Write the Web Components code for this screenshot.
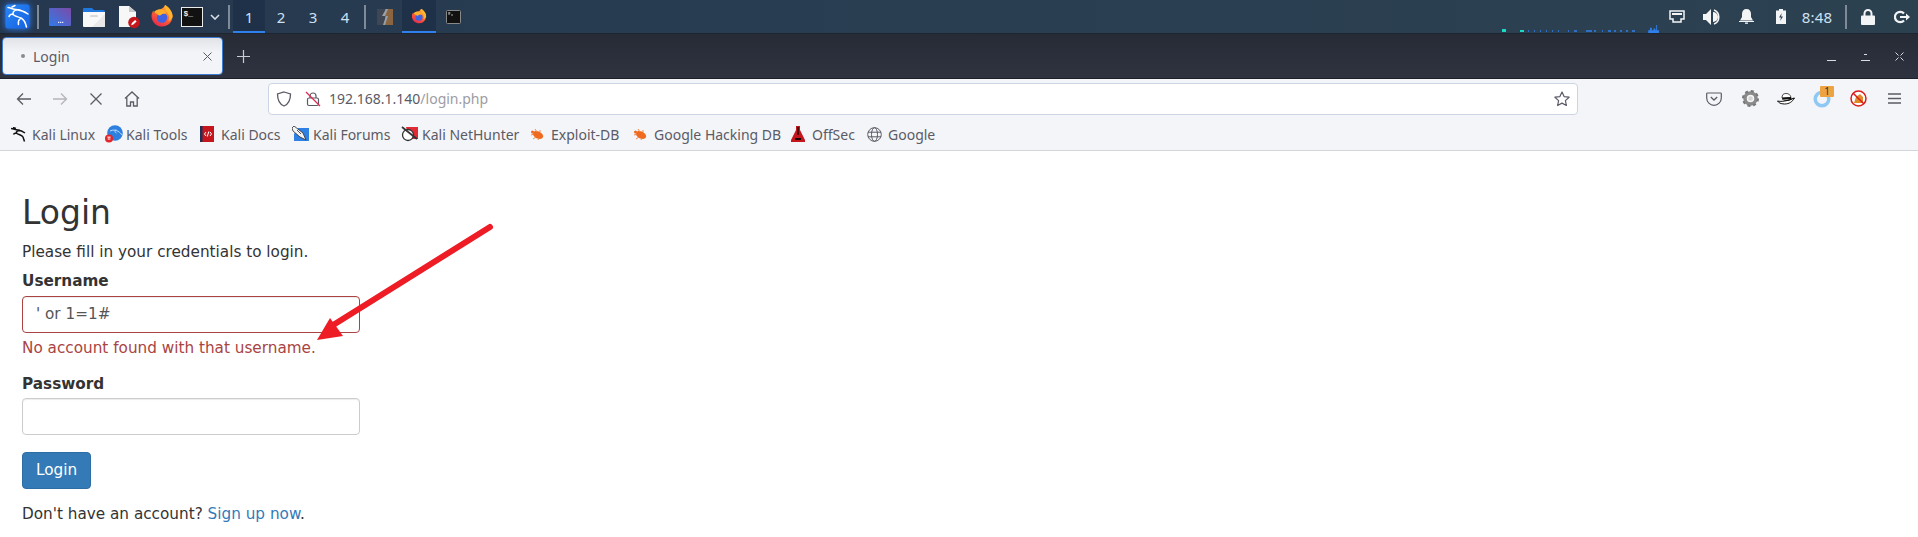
<!DOCTYPE html>
<html>
<head>
<meta charset="utf-8">
<title>Login</title>
<style>
  html, body { margin: 0; height: 537px; overflow: hidden; background: #fff; }
</style>
</head>
<body>
<kali-panel></kali-panel>
<browser-tabs></browser-tabs>
<nav-toolbar></nav-toolbar>
<bookmark-bar></bookmark-bar>
<login-form></login-form>

<script>
const ICONS = {
  kali: `<svg width="25" height="25" viewBox="0 0 25 25"><defs><linearGradient id="k" x1="0" y1="0" x2="1" y2="1"><stop offset="0" stop-color="#2a88f6"/><stop offset="1" stop-color="#1560e0"/></linearGradient></defs><rect x=".5" y=".5" width="24" height="24" rx="2.500" fill="url(#k)"/><path d="M3 3.500c3 .5 5 2 8 2 3 .3 7 1 12 4.500M15 6c-4-.5-7 .5-7 3.500 0 3 5 3 8 4.500 3 1.500 4.500 4.500 5.500 9M8 10.500C6 10 4.500 10.500 4 12.500M7 3l3-1.500M15 15c-1.500 1-2 3-1.500 5.500" fill="none" stroke="#fff" stroke-width="1.500" stroke-linecap="round"/></svg>`,
  desktop: `<svg width="24" height="18" viewBox="0 0 24 18"><defs><linearGradient id="d" x1="0" y1="1" x2="1" y2="0"><stop offset="0" stop-color="#2f7be8"/><stop offset="1" stop-color="#7c4aa8"/></linearGradient></defs><rect width="22" height="18" x="1" rx="1" fill="url(#d)"/><path d="M10 15h1.300v-1.300H10zM12 15h1.300v-1.300H12zM14 15h1.300v-1.300H14z" fill="#e6ecf8"/></svg>`,
  folder: `<svg width="24" height="20" viewBox="0 0 24 20"><path d="M1 2a1 1 0 0 1 1-1h8l2 2h9a2 2 0 0 1 2 2v2H1z" fill="#1f78e0"/><path d="M1 5h22v14a1 1 0 0 1-1 1H2a1 1 0 0 1-1-1z" fill="#f8f8f8"/><path d="M23 7v12a1 1 0 0 1-1 1H10z" fill="#e9e9e9"/><path d="M8 9.500a1 1 0 0 1 1-1h6a1 1 0 0 1 1 1z" fill="#b4b8bd"/></svg>`,
  doc: `<svg width="22" height="24" viewBox="0 0 22 24"><path d="M1 1h10l7 6v15H1z" fill="#f7f7f7"/><path d="M11 1l7 6h-7z" fill="#c9c9c9"/><circle cx="16" cy="17.500" r="5.800" fill="#c4161c"/><path d="M13.200 20.300l.7-2.200 3.200-3 1.500 1.500-3.200 3z" fill="#fff"/></svg>`,
  firefox: `<svg width="22" height="23" viewBox="0 0 22 23"><defs><linearGradient id="f" x1="0.800" y1="0" x2="0.200" y2="1"><stop offset="0" stop-color="#ffbf30"/><stop offset="0.450" stop-color="#ff6a30"/><stop offset="1" stop-color="#e5234f"/></linearGradient></defs><path d="M14 0c5 3 8 8 7.500 12A10.500 10.500 0 1 1 1 8c.5-1 1-2 1.500-2.500L3 8c1-1.500 3-3.500 6-3.500 2-.8 4-2 5-4.500z" fill="url(#f)"/><path d="M14 0c5 3 8 8 7.500 12-1 2-3 4-4 4 1.500-4 0-8-3-10z" fill="#ffb52e"/><circle cx="11" cy="12.500" r="5.200" fill="#3f62e4"/><path d="M3 7c3-3 7-3.500 10-1.500 2 1 2.500 3 2.500 3L11 9c-.5 1-2 1.500-3 1.500C7 9.500 5 8.500 3 7z" fill="#ffae2c"/></svg>`,
  term: `<svg width="22" height="20" viewBox="0 0 22 20"><rect x="0.500" y="0.500" width="21" height="19" fill="#111" stroke="#ececec"/><text x="2.500" y="9" font-family="Liberation Mono, monospace" font-weight="700" font-size="8" fill="#ececec">$_</text></svg>`,
  chev: `<svg width="10" height="6" viewBox="0 0 10 6"><path d="M1 1l4 4 4-4" stroke="#d8dee6" stroke-width="1.600" fill="none"/></svg>`,
  task1: `<svg width="16" height="16" viewBox="0 0 16 16"><rect width="8" height="16" fill="#3f4754"/><rect x="8" width="8" height="16" fill="#8a6540"/><path d="M9 0L5 7h4l-3 9 2 0 3-9H8l3-7z" fill="#9aa0a8"/></svg>`,
  termsm: `<svg width="15" height="14" viewBox="0 0 15 14"><rect x="0.500" y="0.500" width="14" height="13" rx="1" fill="#111" stroke="#888"/><path d="M2.500 3h2M3 2v3M5 5h2" stroke="#ccc" stroke-width=".8"/></svg>`,
  net: `<svg width="16" height="14" viewBox="0 0 16 14"><path d="M1 1h14v8h-3v3H4V9H1z" fill="none" stroke="#f2f4f6" stroke-width="1.500"/><path d="M3 3h10v2H3z" fill="#f2f4f6"/></svg>`,
  vol: `<svg width="18" height="16" viewBox="0 0 18 16"><path d="M0 5h3l5-5v16l-5-5H0z" fill="#f2f4f6"/><path d="M10 3a5 5 0 0 1 0 10" fill="#f2f4f6"/><path d="M11 1a7.500 7.500 0 0 1 0 14" fill="none" stroke="#f2f4f6" stroke-width="1.500"/></svg>`,
  bell: `<svg width="15" height="15" viewBox="0 0 15 15"><path d="M7.500 0c-3 0-4.500 2-4.500 5v3L1 11.500h13L12 8V5c0-3-1.500-5-4.500-5z" fill="#f2f4f6"/><rect x="0" y="12" width="15" height="1" fill="#f2f4f6"/><rect x="6" y="13.500" width="3" height="1.300" fill="#f2f4f6"/></svg>`,
  batt: `<svg width="10" height="15" viewBox="0 0 10 15"><path d="M3 0h4v1.500h3V15H0V1.500h3z" fill="#f2f4f6"/><path d="M5.800 4L3 8.500h2L4.200 12 7 7.500H5z" fill="#2c4050"/></svg>`,
  lock: `<svg width="14" height="16" viewBox="0 0 14 16"><path d="M3.500 7V4.500a3.500 3.500 0 0 1 7 0V7" fill="none" stroke="#f2f4f6" stroke-width="2"/><rect y="6.500" width="14" height="9.500" rx="1" fill="#f2f4f6"/></svg>`,
  logout: `<svg width="16" height="14" viewBox="0 0 16 14"><path d="M10 3.500A5.200 5.200 0 1 0 10 10.500" fill="none" stroke="#f2f4f6" stroke-width="2.200"/><path d="M6 6h6V3.500L16 7l-4 3.500V8H6z" fill="#f2f4f6"/></svg>`,
  back: `<svg width="16" height="14" viewBox="0 0 16 14"><path d="M15 7H2M7 1.500L1.500 7 7 12.500" fill="none" stroke="#5b5b66" stroke-width="1.300"/></svg>`,
  fwd: `<svg width="16" height="14" viewBox="0 0 16 14"><path d="M1 7h13M9 1.500L14.500 7 9 12.500" fill="none" stroke="#b4b4ba" stroke-width="1.300"/></svg>`,
  stop: `<svg width="14" height="14" viewBox="0 0 14 14"><path d="M1.500 1.500l11 11M12.500 1.500l-11 11" stroke="#5b5b66" stroke-width="1.300"/></svg>`,
  home: `<svg width="16" height="16" viewBox="0 0 16 16"><path d="M1 7.500L8 1l7 6.500M2.800 6.500V15h3.700v-4h3v4h3.700V6.500" fill="none" stroke="#5b5b66" stroke-width="1.300"/></svg>`,
  shield: `<svg width="16" height="16" viewBox="0 0 16 16"><path d="M8 1l6.500 2c0 6-1.500 10-6.500 12C3 13 1.500 9 1.500 3z" fill="none" stroke="#5b5b66" stroke-width="1.300"/></svg>`,
  lockoff: `<svg width="16" height="16" viewBox="0 0 16 16"><path d="M5 7V5a3 3 0 0 1 6 0v2" fill="none" stroke="#5b5b66" stroke-width="1.200"/><rect x="2.500" y="7" width="11" height="7.500" rx="1.500" fill="none" stroke="#5b5b66" stroke-width="1.200"/><path d="M1 1l14 14" stroke="#e22850" stroke-width="1.300"/></svg>`,
  star: `<svg width="16" height="16" viewBox="0 0 16 16"><path d="M8 1l2.100 4.600 5 .6-3.700 3.400 1 4.900L8 12.100l-4.400 2.400 1-4.900L.9 6.200l5-.6z" fill="none" stroke="#5b5b66" stroke-width="1.200" stroke-linejoin="round"/></svg>`,
  pocket: `<svg width="16" height="14" viewBox="0 0 16 14"><path d="M1.500 1h13a.8.8 0 0 1 .8.800V6a7.300 7.300 0 0 1-14.600 0V1.800A.8.8 0 0 1 1.500 1z" fill="none" stroke="#5b5b66" stroke-width="1.200"/><path d="M4.800 5L8 8l3.200-3" fill="none" stroke="#5b5b66" stroke-width="1.300"/></svg>`,
  gear: `<svg width="17" height="17" viewBox="0 0 17 17"><circle cx="8.500" cy="8.500" r="5.500" fill="none" stroke="#8a8a8a" stroke-width="3.500"/><circle cx="8.500" cy="8.500" r="7.500" fill="none" stroke="#777" stroke-width="2" stroke-dasharray="3 2.900"/><circle cx="8.500" cy="8.500" r="2.300" fill="#d4d4d4"/></svg>`,
  hat: `<svg width="18" height="12" viewBox="0 0 18 12"><path d="M5 5c0-3 1-4.500 4-4.500s4.500 1.500 5 4z" fill="#fff" stroke="#222" stroke-width=".8"/><path d="M5 4.800l9-.8.3 2-9 .8z" fill="#111"/><path d="M.5 8c4 1 10 0 17-3-2 3.500-5 6-10 6-4 0-6-1.500-7-3z" fill="#fff" stroke="#111" stroke-width="1"/><path d="M6 7.500c4 0 8-1.500 11-3-2 2.500-6 4.500-11 3z" fill="#111"/></svg>`,
  noscript: `<svg width="17" height="17" viewBox="0 0 17 17"><circle cx="8.500" cy="8.500" r="7.500" fill="#fff" stroke="#d91c1c" stroke-width="1.500"/><path d="M4 13l2-6 4-3 3 3v6z" fill="#e08a2a"/><path d="M3.200 3.200l10.600 10.600" stroke="#d91c1c" stroke-width="1.500"/></svg>`,
  menu: `<svg width="13" height="11" viewBox="0 0 13 11"><path d="M0 1h13M0 5.500h13M0 10h13" stroke="#5b5b66" stroke-width="1.300"/></svg>`,
  bmkali: `<svg width="17" height="15" viewBox="0 0 17 15"><path d="M0 1.500c3 .5 5 1.500 7 1.500 3 .3 5 1.500 7 3M9 3.500C6 3.500 4.500 5 6 6.500c2 1.500 5 1.500 6 3.500l1.500 4.500M6 6c-1.500 0-3 0-3.500 1.500M2 .5l3 1" fill="none" stroke="#111" stroke-width="1.500"/></svg>`,
  bmtools: `<svg width="18" height="18" viewBox="0 0 18 18"><circle cx="10" cy="8" r="7.800" fill="#2d7fe0"/><path d="M5 6c3-1.500 6-1 8 .3s3 2 4 3.700M11 4.500c-1.500 1-1.500 3 .5 3.500" fill="none" stroke="#cfe3fa" stroke-width=".9"/><circle cx="4" cy="13.500" r="4" fill="#e0252b"/><path d="M2.300 12h3.400M3.300 12v3M4.800 12v3" stroke="#fff" stroke-width=".7"/></svg>`,
  bmdocs: `<svg width="14" height="16" viewBox="0 0 14 16"><rect width="14" height="16" fill="#c4161c"/><rect width="2.500" height="16" fill="#1d2f55"/><path d="M6 6L4.500 8 6 10M10 6l1.500 2L10 10M8.800 5.500l-1.500 5" fill="none" stroke="#fff" stroke-width="1"/></svg>`,
  bmforum: `<svg width="17" height="16" viewBox="0 0 17 16"><path d="M6 2h11v13H2V8z" fill="#2f80e4"/><path d="M0 2l2-2 9 7 3 7-6-3-7-6z" fill="#f4f4f4" stroke="#2a2a2a" stroke-width=".8"/><path d="M5 4l4 4" stroke="#2a2a2a" stroke-width=".8"/></svg>`,
  bmnh: `<svg width="17" height="16" viewBox="0 0 17 16"><path d="M5 1h12v12H8z" fill="#e02b35"/><circle cx="7" cy="9" r="5.500" fill="#fff" stroke="#333" stroke-width="1.300"/><path d="M1 1l15 12" stroke="#333" stroke-width="1.700"/></svg>`,
  bug: `<svg width="15" height="13" viewBox="0 0 15 13"><ellipse cx="8" cy="7" rx="5.500" ry="3.500" fill="#ef6a1f" transform="rotate(25 8 7)"/><circle cx="2.500" cy="4" r="1.500" fill="#ef6a1f"/><path d="M1 7l3-1M3 11l3-2M8 12l1-2M5 1l2 3M10 2l0 2" stroke="#f08a4a" stroke-width="1"/></svg>`,
  bmoff: `<svg width="14" height="16" viewBox="0 0 14 16"><path d="M5 0h4v4l5 10v2H0v-2l5-10z" fill="#c4161c"/><path d="M6.300 1h1.400v8h-1.400zM4 12h6v2H4z" fill="#200"/></svg>`,
  globe: `<svg width="15" height="15" viewBox="0 0 15 15"><g fill="none" stroke="#5b5b66" stroke-width="1"><circle cx="7.500" cy="7.500" r="6.800"/><ellipse cx="7.500" cy="7.500" rx="3" ry="6.800"/><path d="M1 5.200h13M1 9.800h13"/></g></svg>`
}

class UiIcon extends HTMLElement {
  constructor() {
    super()
    const shadow = this.attachShadow({ mode: 'open' })
    const name = this.getAttribute('name')
    shadow.innerHTML = `<style>:host{display:inline-flex;align-items:center;justify-content:center;flex:none}svg{display:block}</style>${ICONS[name] || ''}`
  }
}
customElements.define('ui-icon', UiIcon)

class KaliPanel extends HTMLElement {
  constructor() {
    super()
    const shadow = this.attachShadow({ mode: 'open' })
    shadow.innerHTML = `
    <style>
      :host { display: flex; height: 34px; align-items: stretch; box-sizing: border-box;
        background: linear-gradient(90deg, #25384f, #2a3e52 50%, #2c4150);
        border-bottom: 1px solid #1c2530;
        font-family: "Noto Sans", sans-serif; color: #cfe0f2; }
      .s { display: flex; align-items: center; justify-content: center; flex: none; }
      .sep { width: 2px; height: 24px; background: #7f8b98; align-self: center; flex: none; }
      .ws { font-size: 15px; width: 32px; height: 33px; box-sizing: border-box; }
      .on { background: #1f3148; box-shadow: inset 0 -2px 0 #2f80ed; }
      .kali { filter: drop-shadow(0 0 3px #2b7fff); }
      .graph { margin-left: auto; margin-right: 10px; align-self: flex-end; display: block; }
      .time { font-size: 15px; letter-spacing: .2px; color: #cfe0f2; }
    </style>
    <div class="s" style="width:34px"><ui-icon class="kali" name="kali"></ui-icon></div>
    <div class="sep" style="margin:0 3px"></div>
    <div class="s" style="width:34px;margin-left:1px"><ui-icon name="desktop"></ui-icon></div>
    <div class="s" style="width:34px"><ui-icon name="folder"></ui-icon></div>
    <div class="s" style="width:36px"><ui-icon name="doc"></ui-icon></div>
    <div class="s" style="width:30px"><ui-icon name="firefox"></ui-icon></div>
    <div class="s" style="width:30px"><ui-icon name="term"></ui-icon></div>
    <div class="s" style="width:16px"><ui-icon name="chev"></ui-icon></div>
    <div class="sep" style="margin:0 3px 0 5px"></div>
    <div class="s ws on">1</div><div class="s ws">2</div><div class="s ws">3</div><div class="s ws">4</div>
    <div class="sep" style="margin:0 2px 0 3px"></div>
    <div class="s" style="width:34px"><ui-icon name="task1"></ui-icon></div>
    <div class="s on" style="width:34px;height:33px"><ui-icon name="firefox" style="transform:scale(.68)"></ui-icon></div>
    <div class="s" style="width:34px"><ui-icon name="termsm"></ui-icon></div>
    <svg class="graph" width="136" height="4" viewBox="0 0 136 4">
      <rect x="0" y="0" width="4" height="3" fill="#1fd8c4"/><rect x="18" y="1" width="4" height="2" fill="#1fd8c4"/>
      <path d="M26 2h1M32 2h1M38 2h1M44 2h1M50 2h1M56 2h1M66 2h1M72 2h3M84 2h6M92 2h2M100 2h1M106 2h3M112 2h2M118 2h2M124 2h2M130 2h3" stroke="#2f80ed" stroke-width="1.500"/>
    </svg>
    <svg style="align-self:flex-end;display:block" width="12" height="8" viewBox="0 0 13 9"><path d="M0 9V6h2V3h2v3h2V4h2v2h1V0h1v6h2v3z" fill="#2f80ed"/></svg>
    <div class="s" style="width:34px"><ui-icon name="net"></ui-icon></div>
    <div class="s" style="width:35px"><ui-icon name="vol"></ui-icon></div>
    <div class="s" style="width:35px"><ui-icon name="bell"></ui-icon></div>
    <div class="s" style="width:34px"><ui-icon name="batt"></ui-icon></div>
    <div class="s time" style="width:38px">8:48</div>
    <div class="sep" style="margin:0 4px 0 9px"></div>
    <div class="s" style="width:33px"><ui-icon name="lock"></ui-icon></div>
    <div class="s" style="width:32px;margin-left:2px"><ui-icon name="logout"></ui-icon></div>
    `
  }
}
customElements.define('kali-panel', KaliPanel)

class BrowserTabs extends HTMLElement {
  constructor() {
    super()
    const shadow = this.attachShadow({ mode: 'open' })
    shadow.innerHTML = `
    <style>
      :host { display: flex; height: 45px; align-items: center; box-sizing: border-box;
        background: linear-gradient(#272b36, #2f3340); border-bottom: 1px solid #1d2028;
        font-family: "Noto Sans", sans-serif; }
      .tab { width: 221px; height: 38px; margin-left: 2px; box-sizing: border-box; display: flex; align-items: center;
        background: linear-gradient(#e2e3e6, #f3f4f8 40%); border: 1px solid #3d7bd0; border-radius: 4px;
        color: #5b5b66; font-size: 14px; padding: 0 10px 0 18px; }
      .dot { width: 4px; height: 4px; border-radius: 50%; background: #8a8a92; margin-right: 8px; }
      .title { flex: 1; }
      .new { margin-left: 14px; display: block; }
      .win { margin-left: auto; display: flex; margin-right: 14px; gap: 25px; }
      svg { display: block; }
    </style>
    <div class="tab"><span class="dot"></span><span class="title">Login</span>
      <svg width="9" height="9" viewBox="0 0 9 9"><path d="M.5.5l8 8M8.500.5l-8 8" stroke="#5b5b66" stroke-width="1"/></svg></div>
    <svg class="new" width="13" height="13" viewBox="0 0 13 13"><path d="M6.500 0v13M0 6.500h13" stroke="#c8ccd4" stroke-width="1.200"/></svg>
    <div class="win">
      <svg width="9" height="9" viewBox="0 0 9 9"><path d="M0 8.500h9" stroke="#d8dce2"/></svg>
      <svg width="9" height="9" viewBox="0 0 9 9"><path d="M0 8.500h9M3 2.500h3" stroke="#d8dce2"/></svg>
      <svg width="9" height="9" viewBox="0 0 9 9"><path d="M.5.500l3 3M8.500.5l-3 3M.5 8.500l3-3M8.500 8.500l-3-3" stroke="#d8dce2"/></svg>
    </div>
    `
  }
}
customElements.define('browser-tabs', BrowserTabs)

class NavToolbar extends HTMLElement {
  constructor() {
    super()
    const shadow = this.attachShadow({ mode: 'open' })
    shadow.innerHTML = `
    <style>
      :host { display: flex; height: 39px; align-items: center; box-sizing: border-box; background: #f4f5f8;
        font-family: "Noto Sans", sans-serif; }
      .b { width: 36px; display: flex; justify-content: center; flex: none; }
      .url { width: 1310px; height: 32px; margin-left: 118px; box-sizing: border-box; flex: none;
        background: #fff; border: 1px solid #ccd5e4; border-radius: 4px; display: flex; align-items: center;
        padding: 0 7px; font-size: 14px; color: #5b5b66; }
      .url .addr { margin-left: 8px; }
      .dim { color: #9c9ca4; }
      .lk { margin-left: 13px; }
      .star { margin-left: auto; }
      .ring { position: relative; }
      .badge { position: absolute; left: 16px; top: -4px; width: 14px; height: 11px; line-height: 11px; border-radius: 1px;
        background: #eda340; color: #333; font-size: 10px; text-align: center; }
      .ext { display: flex; margin-left: 118px; }
    </style>
    <div class="b" style="margin-left:6px"><ui-icon name="back"></ui-icon></div>
    <div class="b"><ui-icon name="fwd"></ui-icon></div>
    <div class="b"><ui-icon name="stop"></ui-icon></div>
    <div class="b"><ui-icon name="home"></ui-icon></div>
    <div class="url"><ui-icon name="shield"></ui-icon><ui-icon class="lk" name="lockoff"></ui-icon>
      <span class="addr">192.168.1.140<span class="dim">/login.php</span></span><ui-icon class="star" name="star"></ui-icon></div>
    <div class="ext">
      <div class="b"><ui-icon name="pocket"></ui-icon></div>
      <div class="b"><ui-icon name="gear"></ui-icon></div>
      <div class="b"><ui-icon name="hat"></ui-icon></div>
      <div class="b ring"><svg width="18" height="18" viewBox="0 0 18 18"><circle cx="9" cy="9" r="6.800" fill="none" stroke="#90c8f4" stroke-width="3.500"/></svg><span class="badge">1</span></div>
      <div class="b"><ui-icon name="noscript"></ui-icon></div>
      <div class="b"><ui-icon name="menu"></ui-icon></div>
    </div>
    `
  }
}
customElements.define('nav-toolbar', NavToolbar)

class BookmarkBar extends HTMLElement {
  constructor() {
    super()
    const shadow = this.attachShadow({ mode: 'open' })
    const items = [
      ['bmkali', 'Kali Linux', 94], ['bmtools', 'Kali Tools', 95], ['bmdocs', 'Kali Docs', 92],
      ['bmforum', 'Kali Forums', 109], ['bmnh', 'Kali NetHunter', 129], ['bug', 'Exploit-DB', 103],
      ['bug', 'Google Hacking DB', 158], ['bmoff', 'OffSec', 76], ['globe', 'Google', 70]
    ]
    shadow.innerHTML = `
    <style>
      :host { display: flex; height: 33px; align-items: center; box-sizing: border-box; padding-left: 11px;
        background: #f4f5f8; border-bottom: 1px solid #d3d5da;
        font-family: "Noto Sans", sans-serif; font-size: 14px; color: #5b5b66; }
      .i { display: flex; align-items: center; flex: none; white-space: nowrap; }
      .ic { width: 21px; display: flex; flex: none; }
    </style>
    ${items.map(([ic, txt, w]) => `<div class="i" style="width:${w}px"><span class="ic"><ui-icon name="${ic}"></ui-icon></span><span>${txt}</span></div>`).join('')}
    `
  }
}
customElements.define('bookmark-bar', BookmarkBar)

class LoginForm extends HTMLElement {
  constructor() {
    super()
    const shadow = this.attachShadow({ mode: 'open' })
    shadow.innerHTML = `
    <style>
      :host { display: block; position: relative; padding: 44px 0 0 22px; font-family: "DejaVu Sans", sans-serif;
        font-size: 15.25px; line-height: 22px; color: #333; }
      h2 { font-size: 33px; font-weight: 500; line-height: 36px; margin: 0 0 10px; }
      p { margin: 0; }
      label { display: block; font-weight: 700; margin-bottom: 4px; }
      .group { width: 338px; }
      .input { height: 37px; box-sizing: border-box; border: 1px solid #ccc; border-radius: 4px; padding: 0 13px;
        line-height: 35px; color: #555; background: #fff; box-shadow: inset 0 1px 1px rgba(0,0,0,.075); }
      .err .input { border-color: #a94442; }
      .help { color: #a94442; margin-top: 4px; white-space: nowrap; }
      .btn { display: block; height: 37px; width: 69px; box-sizing: border-box; text-align: center; line-height: 35px;
        background: #337ab7; border: 1px solid #2e6da4; border-radius: 4px; color: #fff; }
      .arrow { position: absolute; left: 0; top: 0; pointer-events: none; }
      a { color: #337ab7; text-decoration: none; }
    </style>
    <h2>Login</h2>
    <p style="margin-bottom:7px">Please fill in your credentials to login.</p>
    <div class="group err" style="margin-bottom:14px">
      <label>Username</label>
      <div class="input">' or 1=1#</div>
      <div class="help">No account found with that username.</div>
    </div>
    <div class="group" style="margin-bottom:17px">
      <label style="margin-bottom:3px">Password</label>
      <div class="input"></div>
    </div>
    <div class="btn">Login</div>
    <p style="margin-top:14px">Don't have an account? <a>Sign up now</a>.</p>
    <svg class="arrow" width="600" height="300" viewBox="0 0 600 300">
      <path d="M490 76L330 176" stroke="#ee1c25" stroke-width="6" stroke-linecap="round" fill="none"/>
      <path d="M317 189L330 167 343 185z" fill="#ee1c25"/>
    </svg>
    `
  }
}
customElements.define('login-form', LoginForm)
</script>
</body>
</html>
